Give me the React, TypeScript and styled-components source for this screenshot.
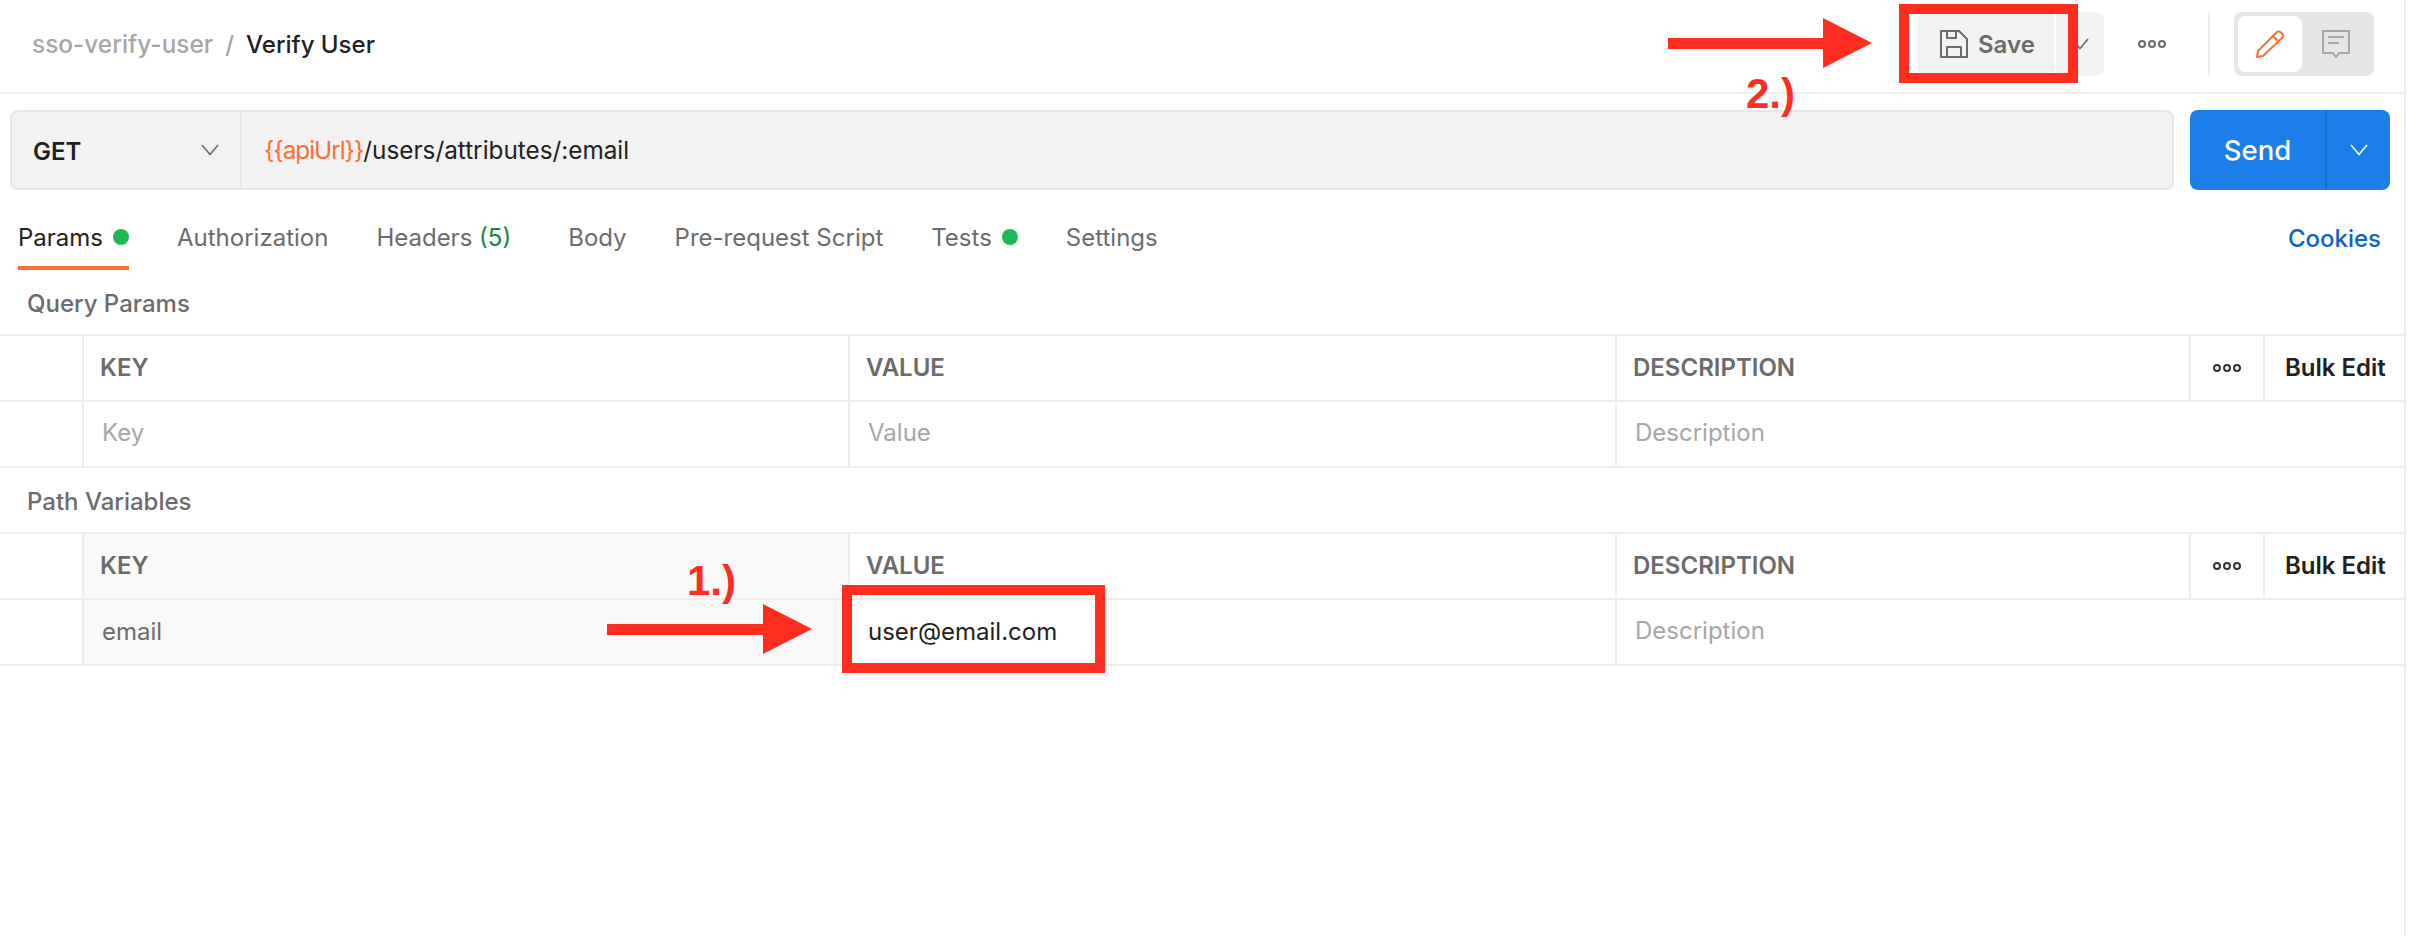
import * as React from "react";
import styled, { createGlobalStyle } from "styled-components";

const GlobalStyle = createGlobalStyle`
  html, body {
    margin: 0;
    padding: 0;
    background: #ffffff;
  }
  * {
    box-sizing: border-box;
  }
`;

const Page = styled.div`
  position: relative;
  width: 2406px;
  height: 936px;
  background: #fff;
  border-right: 2px solid #ededed;
  font-family: Inter, "Liberation Sans", sans-serif;
  color: #212121;
`;

const Header = styled.header`
  height: 94px;
  display: flex;
  align-items: flex-start;
  justify-content: space-between;
  padding: 12px 30px 0 32px;
  border-bottom: 2px solid #ededed;
`;

const Breadcrumb = styled.div`
  height: 64px;
  display: flex;
  align-items: center;
  font-size: 24px;
  font-weight: 500;
`;

const Collection = styled.span`
  color: #a6a6a6;
  font-size: 24.4px;
`;

const Slash = styled.span`
  color: #a6a6a6;
  margin: 0 12px;
`;

const RequestName = styled.span`
  color: #212121;
`;

const HeaderActions = styled.div`
  display: flex;
  align-items: center;
  height: 64px;
`;

const SaveGroup = styled.div`
  width: 186px;
  height: 64px;
  display: flex;
  background: #f2f2f2;
  border-radius: 8px;
`;

const SaveButton = styled.div`
  width: 138px;
  display: flex;
  align-items: center;
  gap: 10px;
  padding-left: 22px;
  border-right: 2px solid #fff;
  color: #6b6b6b;
  font-size: 24px;
  font-weight: 600;
`;

const SaveCaret = styled.div`
  flex: 1;
  display: flex;
  align-items: center;
  justify-content: center;
`;

const MoreWrap = styled.div`
  width: 104px;
  display: flex;
  align-items: center;
  justify-content: center;
  padding-right: 8px;
`;

const VDivider = styled.div`
  width: 2px;
  height: 64px;
  background: #ededed;
  margin-right: 24px;
`;

const ModeToggle = styled.div`
  width: 140px;
  height: 64px;
  display: flex;
  align-items: center;
  padding: 4px;
  background: #e6e6e6;
  border-radius: 8px;
`;

const ModeButton = styled.div<{ $active?: boolean }>`
  ${(p) => (p.$active ? "width: 64px; background: #fff;" : "flex: 1;")}
  height: 56px;
  display: flex;
  align-items: center;
  justify-content: center;
  border-radius: 8px;
`;

const RequestRow = styled.div`
  display: flex;
  gap: 16px;
  padding: 16px 14px 0 10px;
`;

const UrlBar = styled.div`
  flex: 1;
  height: 80px;
  display: flex;
  background: #f2f2f2;
  border: 2px solid #e6e6e6;
  border-radius: 8px;
`;

const MethodSelect = styled.div`
  width: 230px;
  display: flex;
  align-items: center;
  justify-content: space-between;
  padding: 0 20px 0 21px;
  border-right: 2px solid #e6e6e6;
  font-size: 24px;
  font-weight: 600;
`;

const MethodLabel = styled.span`
  padding-top: 2px;
`;

const UrlText = styled.div`
  display: flex;
  align-items: center;
  padding-left: 22px;
  font-size: 24.3px;
  color: #212121;
`;

const Variable = styled.span`
  color: #ff6c37;
  letter-spacing: -1px;
`;

const SendButton = styled.div`
  width: 200px;
  height: 80px;
  display: flex;
  background: #1c7ee9;
  border-radius: 8px;
  color: #fff;
`;

const SendLabel = styled.div`
  width: 137px;
  display: flex;
  align-items: center;
  justify-content: center;
  border-right: 2px solid #166fd0;
  font-size: 27.5px;
  font-weight: 500;
`;

const SendCaret = styled.div`
  flex: 1;
  display: flex;
  align-items: center;
  justify-content: center;
`;

const TabBar = styled.nav`
  height: 80px;
  display: flex;
  align-items: flex-start;
  justify-content: space-between;
  padding-left: 18px;
  padding-right: 23px;
`;

const TabList = styled.div`
  display: flex;
  gap: 48px;
`;

const Tab = styled.div<{ $active?: boolean; $extra?: number }>`
  height: 80px;
  display: flex;
  align-items: center;
  gap: 10px;
  font-size: 24px;
  color: ${(p) => (p.$active ? "#212121" : "#6b6b6b")};
  border-bottom: 4px solid ${(p) => (p.$active ? "#ff6c37" : "transparent")};
  padding-top: 18px;
  margin-right: ${(p) => p.$extra ?? 0}px;
`;

const TabCount = styled.span`
  color: #0f8a3c;
`;

const StatusDot = styled.span`
  width: 16px;
  height: 16px;
  border-radius: 50%;
  background: #1db954;
`;

const CookiesLink = styled.div`
  height: 80px;
  display: flex;
  align-items: center;
  padding-top: 16px;
  font-size: 24px;
  font-weight: 500;
  color: #0b63cc;
`;

const SectionTitle = styled.div`
  height: 64px;
  display: flex;
  align-items: center;
  padding: 3px 0 0 27px;
  font-size: 24px;
  font-weight: 500;
  color: #6b6b6b;
`;

const ParamsTable = styled.div`
  border-top: 2px solid #ededed;
`;

const Row = styled.div`
  height: 66px;
  display: grid;
  grid-template-columns: 82px 766px 767px 574px 74px 1fr;
  border-bottom: 2px solid #ededed;
`;

const Cell = styled.div<{ $shaded?: boolean; $span?: number }>`
  display: flex;
  align-items: center;
  padding-left: 16px;
  border-left: 2px solid #ededed;
  font-size: 24px;
  background: ${(p) => (p.$shaded ? "#f9f9f9" : "transparent")};
  ${(p) => (p.$span ? `grid-column: span ${p.$span};` : "")}
`;

const HandleCell = styled.div``;

const HeadCell = styled(Cell)`
  padding-bottom: 2px;
  font-weight: 600;
  color: #6b6b6b;
`;

const DotsCell = styled(Cell)`
  justify-content: center;
  padding-left: 0;
`;

const BulkEdit = styled(Cell)`
  padding-left: 20px;
  padding-bottom: 2px;
  font-weight: 600;
  color: #212121;
`;

const Placeholder = styled(Cell)`
  padding-left: 18px;
  padding-bottom: 4px;
  color: #a6a6a6;
`;

const Filled = styled(Cell)<{ $muted?: boolean }>`
  padding-left: 18px;
  padding-bottom: 1px;
  color: ${(p) => (p.$muted ? "#6b6b6b" : "#212121")};
`;

const Marker = styled.div<{ $x: number; $y: number; $w: number; $h: number }>`
  position: absolute;
  left: ${(p) => p.$x}px;
  top: ${(p) => p.$y}px;
  width: ${(p) => p.$w}px;
  height: ${(p) => p.$h}px;
  border: 10px solid #ff2d20;
`;

const ArrowMark = styled.svg<{ $x: number; $y: number }>`
  position: absolute;
  left: ${(p) => p.$x}px;
  top: ${(p) => p.$y}px;
`;

const StepLabel = styled.div<{ $x: number; $y: number }>`
  position: absolute;
  left: ${(p) => p.$x}px;
  top: ${(p) => p.$y}px;
  font-family: "Liberation Sans", Arial, sans-serif;
  font-size: 42px;
  line-height: 48px;
  font-weight: 700;
  color: #ff2d20;
`;

const Caret = ({ color = "#6b6b6b" }: { color?: string }) => (
  <svg width="20" height="12" viewBox="0 0 20 12" fill="none">
    <path d="M2 1l8 9.5L18 1" stroke={color} strokeWidth="1.6" />
  </svg>
);

const Dots = ({ color = "#6b6b6b" }: { color?: string }) => (
  <svg width="28" height="8" viewBox="0 0 28 8" fill="none" stroke={color} strokeWidth="2">
    <circle cx="4" cy="4" r="3" />
    <circle cx="14" cy="4" r="3" />
    <circle cx="24" cy="4" r="3" />
  </svg>
);

const SaveIcon = () => (
  <svg width="28" height="28" viewBox="0 0 28 28" fill="none" stroke="#6b6b6b" strokeWidth="2" strokeLinejoin="round">
    <path d="M1 1h18l8 8v18H1z" />
    <path d="M7 1v7h9V1" />
    <path d="M7 27V17h14v10" />
  </svg>
);

const PencilIcon = () => (
  <svg width="28" height="28" viewBox="0 0 28 28" fill="none" stroke="#ff6c37" strokeWidth="2" strokeLinejoin="round">
    <path d="M2 21L21 2q2-1 3.5 0l2 2q1 1.5 0 3.5L7 26l-6 1z" />
    <path d="M17 6l5 5" />
  </svg>
);

const CommentIcon = () => (
  <svg width="28" height="28" viewBox="0 0 28 28" fill="none" stroke="#a6a6a6" strokeWidth="2" strokeLinejoin="round">
    <path d="M1 1h26v22H17l-3 4-3-4H1z" />
    <path d="M6 7h16M6 13h11" />
  </svg>
);

const Arrow = ({ x, y, width }: { x: number; y: number; width: number }) => (
  <ArrowMark $x={x} $y={y} width={width} height="50" viewBox={`0 0 ${width} 50`}>
    <path d={`M0 20h${width - 49}V0l49 25-49 25V31H0z`} fill="#ff2d20" />
  </ArrowMark>
);

export default function App() {
  return (
    <Page>
      <GlobalStyle />
      <Header>
        <Breadcrumb>
          <Collection>sso-verify-user</Collection>
          <Slash>/</Slash>
          <RequestName>Verify User</RequestName>
        </Breadcrumb>
        <HeaderActions>
          <SaveGroup>
            <SaveButton>
              <SaveIcon />
              Save
            </SaveButton>
            <SaveCaret>
              <Caret />
            </SaveCaret>
          </SaveGroup>
          <MoreWrap>
            <Dots />
          </MoreWrap>
          <VDivider />
          <ModeToggle>
            <ModeButton $active>
              <PencilIcon />
            </ModeButton>
            <ModeButton>
              <CommentIcon />
            </ModeButton>
          </ModeToggle>
        </HeaderActions>
      </Header>

      <RequestRow>
        <UrlBar>
          <MethodSelect>
            <MethodLabel>GET</MethodLabel>
            <Caret />
          </MethodSelect>
          <UrlText>
            <Variable>{"{{apiUrl}}"}</Variable>/users/attributes/:email
          </UrlText>
        </UrlBar>
        <SendButton>
          <SendLabel>Send</SendLabel>
          <SendCaret>
            <Caret color="#fff" />
          </SendCaret>
        </SendButton>
      </RequestRow>

      <TabBar>
        <TabList>
          <Tab $active>
            Params
            <StatusDot />
          </Tab>
          <Tab>Authorization</Tab>
          <Tab $extra={9}>
            <span>
              Headers <TabCount>(5)</TabCount>
            </span>
          </Tab>
          <Tab>Body</Tab>
          <Tab>Pre-request Script</Tab>
          <Tab>
            Tests
            <StatusDot />
          </Tab>
          <Tab>Settings</Tab>
        </TabList>
        <CookiesLink>Cookies</CookiesLink>
      </TabBar>

      <SectionTitle>Query Params</SectionTitle>
      <ParamsTable>
        <Row>
          <HandleCell />
          <HeadCell>KEY</HeadCell>
          <HeadCell>VALUE</HeadCell>
          <HeadCell>DESCRIPTION</HeadCell>
          <DotsCell>
            <Dots color="#333" />
          </DotsCell>
          <BulkEdit>Bulk Edit</BulkEdit>
        </Row>
        <Row>
          <HandleCell />
          <Placeholder>Key</Placeholder>
          <Placeholder>Value</Placeholder>
          <Placeholder $span={3}>Description</Placeholder>
        </Row>
      </ParamsTable>

      <SectionTitle>Path Variables</SectionTitle>
      <ParamsTable>
        <Row>
          <HandleCell />
          <HeadCell $shaded>KEY</HeadCell>
          <HeadCell>VALUE</HeadCell>
          <HeadCell>DESCRIPTION</HeadCell>
          <DotsCell>
            <Dots color="#333" />
          </DotsCell>
          <BulkEdit>Bulk Edit</BulkEdit>
        </Row>
        <Row>
          <HandleCell />
          <Filled $shaded $muted>
            email
          </Filled>
          <Filled>user@email.com</Filled>
          <Placeholder $span={3}>Description</Placeholder>
        </Row>
      </ParamsTable>

      <Marker $x={1899} $y={4} $w={179} $h={79} />
      <Arrow x={1668} y={18} width={204} />
      <StepLabel $x={1746} $y={70}>
        2.)
      </StepLabel>

      <Marker $x={842} $y={585} $w={263} $h={88} />
      <Arrow x={607} y={604} width={205} />
      <StepLabel $x={687} $y={557}>
        1.)
      </StepLabel>
    </Page>
  );
}
